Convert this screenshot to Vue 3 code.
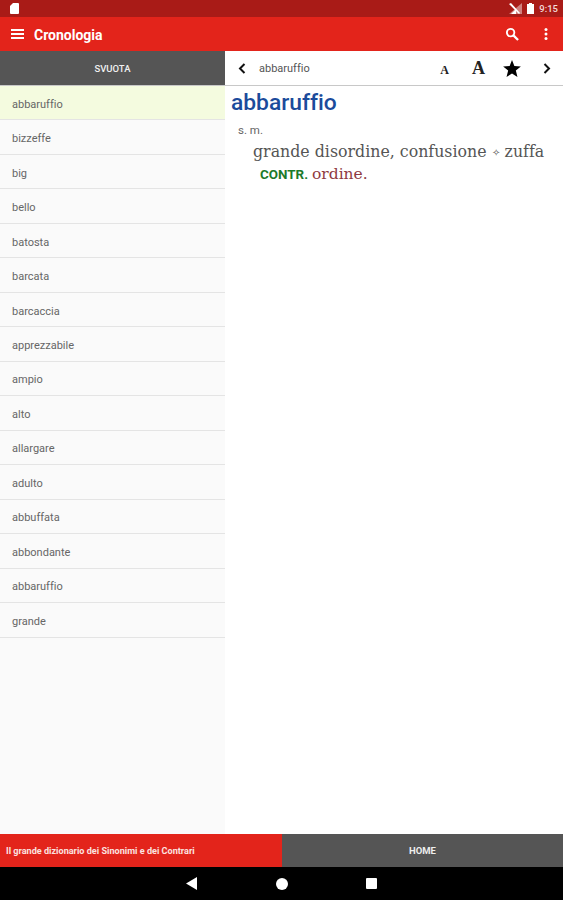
<script setup>
const history = [
  "abbaruffio", "bizzeffe", "big", "bello", "batosta", "barcata", "barcaccia", "apprezzabile",
  "ampio", "alto", "allargare", "adulto", "abbuffata", "abbondante", "abbaruffio", "grande",
];
</script>

<template>
  <div class="screen">
    <div class="status">
      <svg class="sd" width="9" height="11" viewBox="0 0 9 11"><path d="M3 0h5a1 1 0 0 1 1 1v9a1 1 0 0 1-1 1H1a1 1 0 0 1-1-1V3z" fill="#fff" /></svg>
      <span class="status-right">
        <svg width="13" height="11" viewBox="0 0 13 11"><path d="M13 0v11H0z" fill="#fff" opacity=".45" /><path d="M0 1l2-1 9 10-1 1z" fill="#fff" /><path d="M2 11l5-5v5z" fill="#fff" /></svg>
        <svg width="7" height="11" viewBox="0 0 7 11"><path d="M2 0h3v1h2v10H0V1h2z" fill="#fff" /></svg>
        <span class="time">9:15</span>
      </span>
    </div>

    <header class="appbar">
      <svg width="13" height="10" viewBox="0 0 13 10"><path d="M0 0h13v2H0zM0 4h13v2H0zM0 8h13v2H0z" fill="#fff" /></svg>
      <span class="title">Cronologia</span>
      <span class="spacer"></span>
      <svg class="search" width="14" height="14" viewBox="0 0 15 15"><circle cx="6" cy="6" r="4" fill="none" stroke="#fff" stroke-width="2" /><path d="M9 9l5 5" stroke="#fff" stroke-width="2.4" /></svg>
      <svg class="more" width="4" height="12" viewBox="0 0 4 12"><circle cx="2" cy="1.6" r="1.5" fill="#fff" /><circle cx="2" cy="6" r="1.5" fill="#fff" /><circle cx="2" cy="10.4" r="1.5" fill="#fff" /></svg>
    </header>

    <main class="body">
      <aside class="side">
        <button class="clear" type="button">SVUOTA</button>
        <ul class="list">
          <li v-for="(word, i) in history" :key="i" :class="{ active: i === 0 }">{{ word }}</li>
        </ul>
      </aside>

      <section class="detail">
        <div class="toolbar">
          <svg width="8" height="11" viewBox="0 0 8 11"><path d="M6.5 1L2 5.5 6.5 10" fill="none" stroke="#111" stroke-width="2" /></svg>
          <span class="current">abbaruffio</span>
          <span class="spacer"></span>
          <span class="font-small">A</span>
          <span class="font-big">A</span>
          <svg width="18" height="17" viewBox="0 0 24 23"><path d="M12 0l3.2 8.2 8.8.5-6.8 5.6 2.2 8.6L12 18.1l-7.4 4.8 2.2-8.6L0 8.7l8.8-.5z" fill="#000" /></svg>
          <svg class="next" width="8" height="11" viewBox="0 0 8 11"><path d="M1.5 1L6 5.5 1.5 10" fill="none" stroke="#111" stroke-width="2" /></svg>
        </div>
        <article class="entry">
          <h1>abbaruffio</h1>
          <p class="pos">s. m.</p>
          <p class="def">grande disordine, confusione <span class="sep">✧</span> zuffa</p>
          <p class="contr"><b>CONTR.</b> <span>ordine.</span></p>
        </article>
      </section>
    </main>

    <footer class="foot">
      <div class="claim">Il grande dizionario dei Sinonimi e dei Contrari</div>
      <div class="home">HOME</div>
    </footer>

    <nav class="sysnav">
      <svg width="11" height="13" viewBox="0 0 11 13"><path d="M11 0v13L0 6.5z" fill="#fff" /></svg>
      <svg width="12" height="12" viewBox="0 0 12 12"><circle cx="6" cy="6" r="6" fill="#fff" /></svg>
      <svg width="11" height="11" viewBox="0 0 11 11"><rect width="11" height="11" rx="1" fill="#fff" /></svg>
    </nav>
  </div>
</template>

<style scoped>
.screen {
  width: 563px;
  height: 900px;
  display: flex;
  flex-direction: column;
  overflow: hidden;
  font-family: Roboto, "Liberation Sans", sans-serif;
  font-variant-ligatures: none;
  background: #fff;
}

.status {
  height: 17px;
  background: #a91b17;
  display: flex;
  align-items: center;
  justify-content: space-between;
  padding: 0 5px 0 10px;
}

.status-right {
  display: flex;
  align-items: center;
  gap: 5px;
}

.time {
  color: #f4dcda;
  font-size: 9.5px;
  font-weight: 500;
}

.appbar {
  height: 34px;
  background: #e3241b;
  display: flex;
  align-items: center;
  padding: 0 15px 0 11px;
  box-sizing: border-box;
}

.title {
  margin-left: 10px;
  margin-top: 2px;
  color: #fff;
  font-size: 14px;
  font-weight: 700;
}

.spacer {
  flex: 1;
}

.more {
  margin-left: 25px;
}

.body {
  flex: 1;
  display: flex;
  min-height: 0;
}

.side {
  width: 225px;
  background: #fafafa;
  display: flex;
  flex-direction: column;
}

.clear {
  height: 34px;
  border: 0;
  padding: 0;
  background: #555;
  color: #f0f0f0;
  font-family: inherit;
  font-size: 9.5px;
  font-weight: 500;
}

.list {
  list-style: none;
  margin: 0;
  padding: 0;
  border-top: 1px solid #c8c8c8;
}

.list li {
  height: 34.47px;
  box-sizing: border-box;
  display: flex;
  align-items: center;
  padding: 3px 0 0 12px;
  font-size: 11px;
  color: #666;
  border-bottom: 1px solid #e4e4e4;
}

.list li.active {
  background: #f4fbdf;
}

.detail {
  flex: 1;
  min-width: 0;
  background: #fff;
}

.toolbar {
  height: 35px;
  box-sizing: border-box;
  display: flex;
  align-items: center;
  padding: 0 12px 0 13px;
  border-bottom: 1px solid #c8c8c8;
}

.current {
  margin-left: 13px;
  font-size: 11px;
  color: #555;
}

.font-small,
.font-big {
  font-family: "Liberation Serif", serif;
  font-weight: 700;
  color: #222;
  line-height: 1;
}

.font-small {
  font-size: 12px;
  margin-top: 3px;
}

.font-big {
  font-size: 18px;
  margin-left: 23px;
  margin-right: 18px;
}

.next {
  margin-left: 22px;
}

.entry {
  padding: 4px 6px;
}

.entry h1 {
  margin: 0;
  font-size: 22.8px;
  line-height: 26px;
  font-weight: 500;
  color: #1b4b9b;
}

.pos {
  margin: 8px 0 0 7px;
  font-size: 11.5px;
  line-height: 12px;
  color: #666;
}

.def {
  margin: 5px 0 0 22px;
  font-family: "DejaVu Serif", serif;
  font-size: 15.8px;
  line-height: 22px;
  color: #555;
  white-space: nowrap;
}

.sep {
  font-size: 10px;
  vertical-align: 1px;
}

.contr {
  margin: -1px 0 0 29px;
  line-height: 22px;
  white-space: nowrap;
}

.contr b {
  font-size: 13.4px;
  font-weight: 700;
  color: #1c7a2a;
}

.contr span {
  font-family: "DejaVu Serif", serif;
  font-size: 15.5px;
  color: #8f3a42;
}

.foot {
  height: 33px;
  display: flex;
}

.claim {
  width: 282px;
  background: #e3241b;
  color: #fbe3e0;
  font-size: 9.1px;
  font-weight: 700;
  display: flex;
  align-items: center;
  padding-left: 6px;
  box-sizing: border-box;
}

.home {
  flex: 1;
  background: #555;
  color: #eee;
  font-size: 9.5px;
  font-weight: 700;
  display: flex;
  align-items: center;
  justify-content: center;
}

.sysnav {
  height: 33px;
  background: #000;
  display: grid;
  grid-template-columns: 90px 90px 90px;
  justify-content: center;
  justify-items: center;
  align-items: center;
}
</style>
